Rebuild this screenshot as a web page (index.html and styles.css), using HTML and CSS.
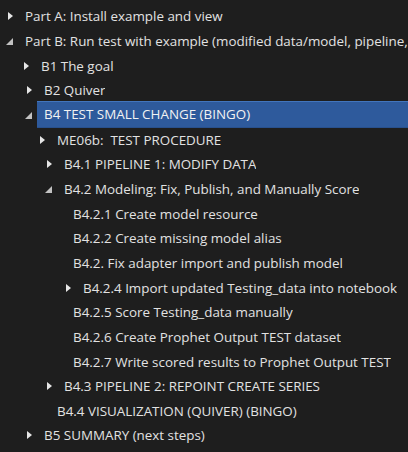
FILE: index.html
```html
<!DOCTYPE html>
<html lang="en">

<head>
    <meta charset="UTF-8">
    <meta name="viewport" content="width=device-width, initial-scale=1.0">
    <title>Notebook Outline</title>
    <link rel="stylesheet" href="styles.css">
</head>

<body>
    <ul class="tree">
        <li class="node lv0"><span class="twisty closed"></span><span class="label">Part A: Install example and view</span></li>
        <li class="node lv0"><span class="twisty open"></span><span class="label">Part B: Run test with example (modified data/model, pipeline, visualization)</span></li>
        <li class="node lv1 first"><span class="twisty closed"></span><span class="label">B1 The goal</span></li>
        <li class="node lv1"><span class="twisty closed"></span><span class="label">B2 Quiver</span></li>
        <li class="node lv1 selected"><span class="twisty open"></span><span class="label">B4 TEST SMALL CHANGE (BINGO)</span></li>
        <li class="node lv2"><span class="twisty closed"></span><span class="label">ME06b:&nbsp; TEST PROCEDURE</span></li>
        <li class="node lv3"><span class="twisty closed"></span><span class="label">B4.1 PIPELINE 1: MODIFY DATA</span></li>
        <li class="node lv3"><span class="twisty open"></span><span class="label">B4.2 Modeling: Fix, Publish, and Manually Score</span></li>
        <li class="node leaf4"><span class="label">B4.2.1 Create model resource</span></li>
        <li class="node leaf4"><span class="label">B4.2.2 Create missing model alias</span></li>
        <li class="node leaf4"><span class="label">B4.2. Fix adapter import and publish model</span></li>
        <li class="node lv4"><span class="twisty closed"></span><span class="label">B4.2.4 Import updated Testing_data into notebook</span></li>
        <li class="node leaf4"><span class="label">B4.2.5 Score Testing_data manually</span></li>
        <li class="node leaf4"><span class="label">B4.2.6 Create Prophet Output TEST dataset</span></li>
        <li class="node leaf4"><span class="label">B4.2.7 Write scored results to Prophet Output TEST</span></li>
        <li class="node lv3"><span class="twisty closed"></span><span class="label">B4.3 PIPELINE 2: REPOINT CREATE SERIES</span></li>
        <li class="node leaf2"><span class="label">B4.4 VISUALIZATION (QUIVER) (BINGO)</span></li>
        <li class="node lv1"><span class="twisty closed"></span><span class="label">B5 SUMMARY (next steps)</span></li>
    </ul>
</body>

</html>
```

FILE: styles.css
```css
body {
    margin: 0;
    background: #1e1e1e;
    font-family: "Open Sans", sans-serif;
    font-size: 13.4px;
    color: #e2e2e2;
    overflow: hidden;
}

.tree {
    list-style: none;
    margin: 0;
    padding: 4px 0 0;
}

.node {
    display: flex;
    align-items: center;
    height: 24.67px;
    white-space: nowrap;
}

/* indentation per depth */
.lv0 { padding-left: 6px; }
.lv1 { padding-left: 25px; }
.lv1.first { padding-left: 22px; }
.lv2 { padding-left: 38px; }
.lv3 { padding-left: 45px; }
.lv4 { padding-left: 64px; }
.leaf2 { padding-left: 57px; }
.leaf4 { padding-left: 73px; }

.label {
    overflow: hidden;
}

.twisty {
    flex: none;
    width: 19px;
    height: 100%;
    display: flex;
    align-items: center;
}

.twisty.closed::before {
    content: "";
    margin-left: 2px;
    border-left: 5px solid #e6e6e6;
    border-top: 4px solid transparent;
    border-bottom: 4px solid transparent;
}

.twisty.open::before {
    content: "";
    margin-top: 1px;
    border-bottom: 7px solid #c2c2c2;
    border-left: 7px solid transparent;
}

.node.selected .label {
    flex: 1;
    margin-left: -7px;
    padding-left: 7px;
    height: 25px;
    line-height: 25px;
    background: #2e5a9c;
    border-top: 1px solid #4275bd;
    border-bottom: 1px solid #28508d;
    color: #f2f2f2;
}
```
